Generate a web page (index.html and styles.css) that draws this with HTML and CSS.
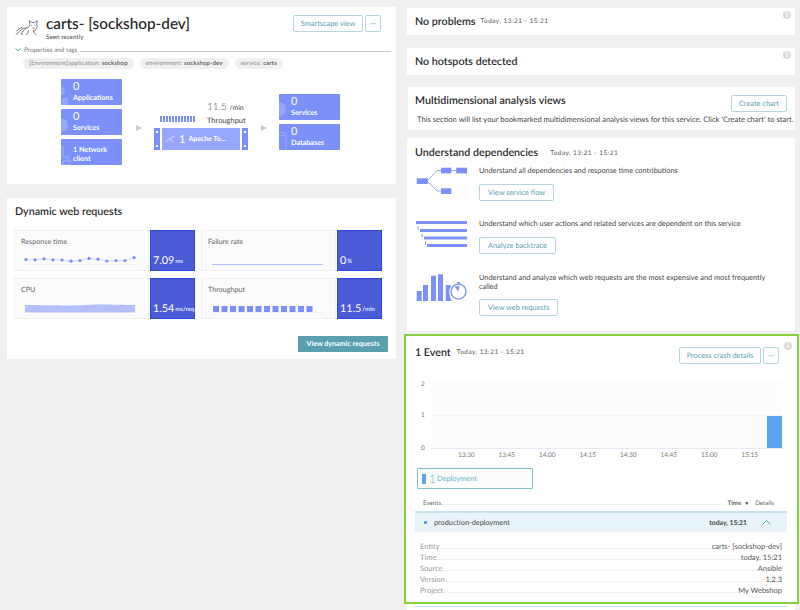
FILE: index.html
```html
<!DOCTYPE html>
<html>
<head>
	<meta charset="UTF-8">
	<title>carts- [sockshop-dev]</title>
	<link rel="stylesheet" href="styles.css">
</head>
<body>
<div class="page">
	<div class="col left">
		<div class="card head-card">
			<div class="head">
				<svg class="cat" width="23" height="18" viewBox="0 0 34 24" fill="none" stroke="#555" stroke-width="1.100">
					<path d="M1 22l6-5c2-3 5-5 9-5l4-1 2-4-1-6 4 3h4l4-3-1 6 1 3-3 5-3 1 2 4 3 3"/>
					<path d="M16 12c-1 3-3 4-5 5l-2 4h3M20 15l-1 5-3 2M2 17c2-3 6-5 9-6M24 8l1 1M30 8l-1 1M26 12h3"/>
				</svg>
				<div class="head-text">
					<h1>carts- [sockshop-dev]</h1>
					<div class="seen">Seen recently</div>
				</div>
				<div class="head-btns">
					<a class="btn wide">Smartscape view</a>
					<a class="btn more">···</a>
				</div>
			</div>
			<div class="props">
				<svg width="6" height="4" viewBox="0 0 6 4" fill="none" stroke="#5fa8c0" stroke-width="1"><path d="M0.5 0.5l2.5 2.5 2.5-2.5"/></svg>
				<span>Properties and tags</span>
				<i></i>
			</div>
			<div class="tags">
				<span class="tag">[Environment]application: <b>sockshop</b></span>
				<span class="tag">environment: <b>sockshop-dev</b></span>
				<span class="tag">service: <b>carts</b></span>
			</div>
			<div class="scape">
				<div class="scape-col">
					<div class="node">
						<svg class="node-ico" width="8" height="26" viewBox="0 0 8 26" fill="#97a7fb"><circle cx="0" cy="12" r="4"/><rect x="1" y="19" width="6" height="7"/></svg>
						<strong>0</strong><span>Applications</span>
					</div>
					<div class="node">
						<svg class="node-ico" width="8" height="26" viewBox="0 0 8 26" fill="#97a7fb"><circle cx="0" cy="16" r="7"/></svg>
						<strong>0</strong><span>Services</span>
					</div>
					<div class="node">
						<svg class="node-ico" width="10" height="26" viewBox="0 0 10 26" fill="none" stroke="#97a7fb" stroke-width="1.500"><path d="M0 8h2v8H0M2 18h5v3M2 22h8v4H2z"/></svg>
						<span class="node-txt">1 Network<br>client</span>
					</div>
				</div>
				<div class="arrow"></div>
				<div class="mid">
					<div class="mid-top">
						<div class="tp-bars">
							<i></i><i></i><i></i><i></i><i></i><i></i><i></i><i></i><i></i><i></i><i></i><i></i>
						</div>
						<div class="tp">
							<div class="tp-num">11.5 <small>/min</small></div>
							<div class="tp-lbl">Throughput</div>
						</div>
					</div>
					<div class="proc">
						<div class="proc-side"><i></i><i></i></div>
						<div class="proc-main">
							<svg width="10" height="8" viewBox="0 0 10 8" fill="none" stroke="#d5dcff" stroke-width="0.8"><path d="M0 7l3-3 2 1 2-4 2 1M3 4l2-2M5 5l2 2"/></svg>
							<b>1</b> Apache To...
						</div>
						<div class="proc-side"><i></i><i></i></div>
					</div>
				</div>
				<div class="arrow"></div>
				<div class="scape-col">
					<div class="node">
						<svg class="node-ico" width="8" height="26" viewBox="0 0 8 26" fill="#97a7fb"><circle cx="0" cy="15" r="7"/></svg>
						<strong>0</strong><span>Services</span>
					</div>
					<div class="node">
						<svg class="node-ico" width="8" height="26" viewBox="0 0 8 26" fill="none" stroke="#97a7fb" stroke-width="1"><ellipse cx="3" cy="10" rx="4" ry="1.500"/><path d="M7 10v16"/></svg>
						<strong>0</strong><span>Databases</span>
					</div>
				</div>
			</div>
		</div>

		<div class="card dyn-card">
			<h2>Dynamic web requests</h2>
			<div class="tiles">
				<div class="tile">
					<div class="tile-body">
						<div class="tile-lbl">Response time</div>
						<svg width="116" height="14" viewBox="0 0 116 14" fill="#7b90f9" stroke="none">
							<path d="M2 12.500h112" stroke="#eef0fb" stroke-width="1"/>
							<path d="M2 7.500l9 .3 9-1 9 1 9 .2 9 1.200 9-.6 9-2.200 9 .8 9 1.800 9-.4 9 0 9-3" fill="none" stroke="#c3cdfb" stroke-width="0.8"/>
							<circle cx="2" cy="7.500" r="1.600"/><circle cx="11" cy="7.800" r="1.600"/><circle cx="20" cy="6.800" r="1.600"/><circle cx="29" cy="7.800" r="1.600"/><circle cx="38" cy="8" r="1.600"/><circle cx="47" cy="9.200" r="1.600"/><circle cx="56" cy="8.600" r="1.600"/><circle cx="65" cy="6.400" r="1.600"/><circle cx="74" cy="7.200" r="1.600"/><circle cx="83" cy="9" r="1.600"/><circle cx="92" cy="8.600" r="1.600"/><circle cx="101" cy="8.600" r="1.600"/><circle cx="110" cy="5.600" r="1.600"/>
						</svg>
					</div>
					<div class="tile-val"><b>7.09</b> ms</div>
				</div>
				<div class="tile">
					<div class="tile-body">
						<div class="tile-lbl">Failure rate</div>
						<svg width="116" height="14" viewBox="0 0 116 14"><path d="M1 12.500h111" stroke="#b4c0fb" stroke-width="1"/></svg>
					</div>
					<div class="tile-val"><b>0</b> %</div>
				</div>
				<div class="tile">
					<div class="tile-body">
						<div class="tile-lbl">CPU</div>
						<svg width="116" height="14" viewBox="0 0 116 14"><path d="M1 5c30 0 40 1 60 0s30 0 50 0v7.500H1z" fill="#b4c0fb"/></svg>
					</div>
					<div class="tile-val"><b>1.54</b> ms/req</div>
				</div>
				<div class="tile">
					<div class="tile-body">
						<div class="tile-lbl">Throughput</div>
						<svg width="116" height="14" viewBox="0 0 116 14" fill="#7b90f9">
							<path d="M1 12.500h112" stroke="#eef0fb" stroke-width="1"/>
							<rect x="2" y="6" width="6" height="6"/><rect x="10.500" y="6" width="6" height="6"/><rect x="19" y="6" width="6" height="6"/><rect x="27.500" y="6" width="6" height="6"/><rect x="36" y="6" width="6" height="6"/><rect x="44.500" y="6" width="6" height="6"/><rect x="53" y="6" width="6" height="6"/><rect x="61.500" y="6" width="6" height="6"/><rect x="70" y="6" width="6" height="6"/><rect x="78.500" y="6" width="6" height="6"/><rect x="87" y="6" width="6" height="6"/><rect x="95.500" y="6" width="6" height="6"/>
						</svg>
					</div>
					<div class="tile-val"><b>11.5</b> /min</div>
				</div>
			</div>
			<div class="dyn-foot"><a class="btn-solid">View dynamic requests</a></div>
		</div>
	</div>

	<div class="col right">
		<div class="card bar-card">
			<span class="info">i</span>
			<h2>No problems</h2><span class="when">Today, 13:21 - 15:21</span>
		</div>
		<div class="card bar-card">
			<span class="info">i</span>
			<h2>No hotspots detected</h2>
		</div>
		<div class="card multi-card">
			<div class="multi-top">
				<h2>Multidimensional analysis views</h2>
				<a class="btn">Create chart</a>
			</div>
			<p>This section will list your bookmarked multidimensional analysis views for this service. Click 'Create chart' to start.</p>
		</div>
		<div class="card dep-card">
			<div class="dep-title"><h2>Understand dependencies</h2><span class="when">Today, 13:21 - 15:21</span></div>
			<div class="dep">
				<svg width="52" height="28" viewBox="0 0 52 28" fill="#7b90f9" stroke="#7b90f9">
					<rect x="0.700" y="11.300" width="11" height="5.700" stroke="none"/><rect x="25" y="0.700" width="10.300" height="5.700" stroke="none"/><rect x="40.300" y="0.700" width="10.700" height="5.700" stroke="none"/><rect x="25" y="21.300" width="10.300" height="5.700" stroke="none"/>
					<path d="M11 14L21 3.500h4M35 3.500h6M11 14l10 10h4" fill="none" stroke-width="0.800"/>
				</svg>
				<div class="dep-main">
					<p>Understand all dependencies and response time contributions</p>
					<a class="btn">View service flow</a>
				</div>
			</div>
			<div class="dep">
				<svg width="52" height="28" viewBox="0 0 52 28" fill="#7b90f9">
					<rect x="0" y="0" width="51" height="3"/><rect x="4" y="8" width="47" height="3"/><rect x="8" y="15.500" width="43" height="3"/><rect x="11" y="23" width="40" height="3"/>
					<rect x="1.500" y="5.500" width="1" height="3"/><rect x="5.500" y="13" width="1" height="3"/><rect x="9" y="20.500" width="1" height="3"/>
				</svg>
				<div class="dep-main">
					<p>Understand which user actions and related services are dependent on this service</p>
					<a class="btn">Analyze backtrace</a>
				</div>
			</div>
			<div class="dep">
				<svg width="52" height="28" viewBox="0 0 52 28" fill="#7b90f9">
					<rect x="0.700" y="17" width="5" height="10"/><rect x="7" y="11" width="5" height="16"/><rect x="15" y="1.700" width="5" height="25.300"/><rect x="22" y="0.300" width="5" height="26.700"/><path d="M29.700 11h5v2c-1 1.500-1.500 3-1.500 5 0 3 1 6 2.500 9h-6z"/>
					<circle cx="42.500" cy="17.600" r="7.500" fill="none" stroke="#7b90f9" stroke-width="1.300"/><path d="M42.500 17.600l-4-5 5-.5z"/><path d="M41 8h3v1.500h-3z"/>
				</svg>
				<div class="dep-main">
					<p>Understand and analyze which web requests are the most expensive and most frequently called</p>
					<a class="btn">View web requests</a>
				</div>
			</div>
		</div>
		<div class="card event-card">
			<span class="info">i</span>
			<div class="ev-head">
				<h2>1 Event</h2><span class="when">Today, 13:21 - 15:21</span>
				<div class="ev-btns">
					<a class="btn">Process crash details</a>
					<a class="btn more">···</a>
				</div>
			</div>
			<div class="chart">
				<div class="y-axis"><span>2</span><span>1</span><span>0</span></div>
				<div class="plot-wrap">
					<div class="plot">
						<div class="plot-half"></div>
						<div class="plot-half low"><div class="bar"></div></div>
					</div>
					<div class="x-axis">
						<span>13:30</span><span>13:45</span><span>14:00</span><span>14:15</span><span>14:30</span><span>14:45</span><span>15:00</span><span>15:15</span>
					</div>
				</div>
			</div>
			<div class="deploy"><i></i><b>1</b><span>Deployment</span></div>
			<div class="ev-cols">
				<span>Events</span><em></em><b>Time</b><span class="sort">▼</span><span>Details</span>
			</div>
			<div class="ev-row">
				<i></i><span class="ev-name">production-deployment</span>
				<b>today, 15:21</b>
				<svg width="9" height="5" viewBox="0 0 9 5" fill="none" stroke="#4f9db5" stroke-width="1"><path d="M0.500 4.500l4-4 4 4"/></svg>
			</div>
			<div class="kv"><span>Entity</span><em></em><b>carts- [sockshop-dev]</b></div>
			<div class="kv"><span>Time</span><em></em><b>today, 15:21</b></div>
			<div class="kv"><span>Source</span><em></em><b>Ansible</b></div>
			<div class="kv"><span>Version</span><em></em><b>1.2.3</b></div>
			<div class="kv"><span>Project</span><em></em><b>My Webshop</b></div>
		</div>
		<div class="card next-card"><i></i></div>
	</div>
</div>
</body>
</html>
```

FILE: styles.css
```css
html, body{
	margin: 0;
	height: 610px;
	overflow: hidden;
	background: #f0f0f0;
}
body{
	font-family: Lato, "Noto Sans", sans-serif;
	color: #454646;
	text-rendering: geometricPrecision;
}
h1, h2, p{
	margin: 0;
}
.page{
	display: flex;
	gap: 11px;
	padding: 7px 5px 0 7px;
}
.col{
	display: flex;
	flex-direction: column;
}
.left{
	width: 389px;
	gap: 14px;
}
.right{
	width: 388px;
}
.card{
	position: relative;
	background: #fff;
	box-sizing: border-box;
}
h2{
	font-size: 10.700px;
	font-weight: 600;
	color: #2b2c2c;
	line-height: 16px;
	white-space: nowrap;
}
.when{
	font-size: 6.500px;
	letter-spacing: 0.45px;
	color: #555;
	white-space: nowrap;
}
.info{
	position: absolute;
	right: 4px;
	top: 3px;
	width: 8px;
	height: 8px;
	border-radius: 50%;
	background: #dcdcdc;
	color: #fff;
	font-size: 7px;
	font-weight: 700;
	line-height: 8px;
	text-align: center;
}
.btn{
	display: inline-block;
	box-sizing: border-box;
	height: 17px;
	padding: 0 8px;
	border: 1px solid #b7d5df;
	border-radius: 2px;
	background: #fff;
	color: #5a9fb6;
	font-size: 7.400px;
	line-height: 15px;
	text-align: center;
	white-space: nowrap;
}
.btn.more{
	width: 16px;
	padding: 0;
}
.btn.wide{
	width: 70px;
	padding: 0;
}

/* service header */
.head-card{
	height: 177px;
}
.head{
	display: flex;
	padding: 7px 15px 0 8px;
	height: 30px;
}
.cat{
	margin: 5px 8px 0 0;
}
.head-text{
	flex: 1;
}
h1{
	font-size: 15.300px;
	font-weight: 500;
	color: #222;
	line-height: 20px;
	white-space: nowrap;
}
.seen{
	font-size: 6.300px;
	line-height: 11px;
	margin-top: -2px;
}
.head-btns{
	display: flex;
	gap: 2px;
	margin-top: 1px;
}
.props{
	display: flex;
	align-items: center;
	gap: 3px;
	padding-left: 8px;
	margin-top: 2px;
	height: 9px;
	font-size: 6.300px;
	color: #777;
}
.props svg{
	margin-bottom: 1px;
}
.props i{
	flex: 1;
	margin: 2px 5px 0 0;
	border-top: 1px solid #c9c9c9;
}
.tags{
	display: flex;
	gap: 6px;
	padding-left: 16px;
	margin-top: 3px;
}
.tag{
	height: 11px;
	padding: 0 6px;
	border-radius: 6px;
	background: #f0f0f0;
	font-size: 6.100px;
	letter-spacing: 0.1px;
	line-height: 11px;
	color: #888;
	white-space: nowrap;
}
.tag b{
	font-weight: 600;
	color: #555;
}
.scape{
	display: flex;
	align-items: center;
	padding: 10px 0 0 54px;
}
.scape-col{
	display: flex;
	flex-direction: column;
	gap: 4px;
}
.scape-col:last-child{
	margin-left: 12px;
}
.node{
	position: relative;
	width: 61px;
	height: 26px;
	box-sizing: border-box;
	padding: 1px 0 0 12px;
	border-radius: 1px;
	background: #7b90f9;
	color: #fff;
	overflow: hidden;
}
.node strong{
	display: block;
	font-size: 11px;
	font-weight: 400;
	line-height: 13px;
}
.node span{
	display: block;
	font-size: 7.200px;
	font-weight: 700;
	line-height: 10px;
}
.node .node-txt{
	line-height: 9px;
	padding-top: 5px;
}
.node-ico{
	position: absolute;
	left: 0;
	top: 0;
}
.arrow{
	flex: none;
	width: 0;
	height: 0;
	margin: 12px 0 0 13px;
	border-left: 6px solid #c8c8c8;
	border-top: 3px solid transparent;
	border-bottom: 3px solid transparent;
}
.scape-col + .arrow{
	margin-left: 14px;
}
.mid{
	margin: 6px 0 0 12px;
	width: 94px;
}
.mid-top{
	display: flex;
	align-items: flex-end;
	padding-left: 6px;
}
.tp-bars{
	display: flex;
	gap: 1px;
	width: 47px;
	margin-bottom: 6px;
}
.tp-bars i{
	width: 2px;
	height: 6px;
	background: #7b90f9;
}
.tp{
	font-size: 7.500px;
	line-height: 10px;
	white-space: nowrap;
}
.tp-num{
	font-size: 10px;
	font-weight: 300;
	line-height: 15px;
}
.tp-num small{
	font-size: 7px;
	font-weight: 400;
}
.tp-lbl{
	margin-bottom: 2px;
}
.proc{
	display: flex;
	height: 22px;
	gap: 1px;
}
.proc-side{
	display: flex;
	flex-direction: column;
	justify-content: space-between;
	align-items: center;
	width: 6px;
	padding: 3px 0;
	box-sizing: border-box;
	background: #7b90f9;
}
.proc-side i{
	width: 2px;
	height: 2px;
	background: #fff;
}
.proc-main{
	display: flex;
	align-items: center;
	gap: 3px;
	flex: 1;
	margin: 0 1px;
	padding-left: 4px;
	background: #97a7fb;
	color: #fff;
	font-size: 7px;
	font-weight: 700;
}
.proc-main b{
	font-size: 11px;
	font-weight: 400;
}

/* dynamic web requests */
.dyn-card{
	height: 161px;
	padding-top: 6px;
}
.dyn-card h2{
	margin-left: 8px;
}
.tiles{
	display: grid;
	grid-template-columns: 181px 181px;
	column-gap: 6px;
	row-gap: 7px;
	margin: 10px 0 0 7px;
}
.tile{
	display: flex;
	height: 41px;
}
.tile-body{
	flex: none;
	box-sizing: border-box;
	width: 135px;
	margin-right: 1px;
	padding: 6px 0 0 6px;
	border: 1px solid #f0f0f0;
	background: #fbfbfb;
}
.tile-lbl{
	font-size: 7.200px;
	line-height: 10px;
	color: #666;
}
.tile-body svg{
	display: block;
	margin: 5px 0 0 3px;
}
.tile-val{
	flex: none;
	width: 45px;
	display: flex;
	align-items: flex-end;
	gap: 1px;
	padding: 0 0 3px 2px;
	background: #4a5dd6;
	border: 1px solid #2c47d8;
	box-sizing: border-box;
	color: #dfe3ff;
	font-size: 6px;
	font-weight: 700;
	line-height: 10px;
	white-space: nowrap;
}
.tile-val b{
	font-size: 10.800px;
	font-weight: 400;
	color: #fff;
	line-height: 13px;
}
.dyn-foot{
	display: flex;
	justify-content: flex-end;
	margin: 17px 8px 0 0;
}
.btn-solid{
	height: 16px;
	width: 90px;
	border-radius: 1px;
	background: #5a9fb0;
	color: #fff;
	font-size: 7.100px;
	font-weight: 700;
	line-height: 16px;
	text-align: center;
	white-space: nowrap;
}

/* right column */
.bar-card{
	display: flex;
	align-items: center;
	gap: 5px;
	height: 27px;
	margin: 1px 0 12px;
	padding-left: 8px;
}
.multi-card{
	height: 43px;
	margin: 0 0 8px 1px;
	padding: 5px 8px 0 7px;
}
.multi-top{
	display: flex;
	justify-content: space-between;
	height: 22px;
}
.multi-top h2{
	margin-top: 1px;
}
.multi-top .btn{
	margin-top: 3px;
	padding: 0;
	width: 56px;
}
.multi-card p{
	margin-left: 2px;
	font-size: 7.600px;
	line-height: 10px;
	white-space: nowrap;
}
.dep-card{
	height: 193px;
	padding: 6px 8px 0 8px;
}
.dep-title{
	display: flex;
	align-items: center;
	gap: 12px;
	height: 16px;
	margin-top: 1px;
}
.dep{
	display: flex;
	gap: 11px;
	height: 53px;
	padding-left: 1px;
}
.dep:nth-child(2){
	height: 48px;
	margin-top: 3px;
}
.dep:nth-child(3){
	margin-top: 7px;
}
.dep:nth-child(4){
	margin-top: 1px;
}
.dep svg{
	flex: none;
	margin-top: 2px;
}
.dep:nth-child(2) svg{
	margin-top: 3px;
}
.dep:nth-child(4) svg{
	margin-top: 1px;
}
.dep-main p{
	font-size: 7.350px;
	line-height: 9px;
	width: 306px;
}
.dep:nth-child(2) p{
	margin-top: 2px;
}
.dep-main .btn{
	margin-top: 9px;
	height: 17px;
}
.dep:nth-child(4) .btn{
	margin-top: 8px;
}

/* event card sits under a green highlight */
.event-card{
	height: 270px;
	margin: 3px -4px 0 -3px;
	padding: 0 10px 0 9px;
	border: 2px solid #86d13b;
}
.event-card .info{
	top: 6px;
	right: 5px;
}
.ev-head{
	display: flex;
	align-items: center;
	gap: 6px;
	height: 30px;
	margin-top: 1px;
}
.ev-head h2, .ev-head .when{
	margin-top: 1px;
}
.ev-btns{
	display: flex;
	gap: 2px;
	margin-left: auto;
	margin-right: 8px;
	margin-top: 7px;
}
.ev-btns .btn{
	padding: 0 6.500px;
}
.ev-btns .btn.more{
	padding: 0;
}
.chart{
	display: flex;
	margin-top: 15px;
}
.y-axis{
	display: flex;
	flex-direction: column;
	justify-content: space-between;
	width: 20px;
	height: 66px;
	margin: 2px 0 0 -4px;
	padding-left: 10px;
	box-sizing: border-box;
	font-size: 6.500px;
	color: #777;
	line-height: 8px;
}
.y-axis span{
	margin-top: -3px;
}
.y-axis span:last-child{
	margin: 0 0 -3px;
}
.plot-wrap{
	width: 352px;
}
.plot{
	display: flex;
	flex-direction: column;
	height: 67px;
	box-sizing: border-box;
	border-bottom: 1px solid #e6eaf5;
	background: #fcfcfc;
}
.plot-half{
	flex: 1;
	display: flex;
	justify-content: flex-end;
}
.plot-half.low{
	border-top: 1px solid #f3f3f3;
}
.bar{
	width: 15px;
	margin-right: 1px;
	background: #5ba4f0;
}
.x-axis{
	display: flex;
	padding: 3px 0 0 15px;
	font-size: 6.500px;
	line-height: 8px;
	color: #777;
}
.x-axis span{
	width: 40.500px;
	text-align: center;
}
.deploy{
	display: flex;
	align-items: center;
	width: 116px;
	height: 21px;
	margin: 8px 0 0 2px;
	padding-left: 4px;
	box-sizing: border-box;
	border: 1px solid #7fbfd0;
	border-radius: 1px;
	background: #fbfbfb;
	color: #66b4cc;
	font-size: 7.400px;
}
.deploy i{
	width: 4px;
	height: 10px;
	background: #5ba4f0;
}
.deploy b{
	margin: 0 1px 0 3px;
	font-size: 12px;
	font-weight: 300;
}
.ev-cols, .kv{
	display: flex;
	align-items: baseline;
	white-space: nowrap;
}
.ev-cols{
	margin: 10px 13px 0 8px;
	height: 9px;
	font-size: 6.200px;
	line-height: 9px;
	color: #666;
}
.ev-cols em, .kv em{
	flex: 1;
	margin: 0 1px;
	border-bottom: 1px dotted #e4e4e4;
}
.ev-cols b{
	font-weight: 700;
}
.sort{
	margin: 0 6px 0 3px;
	font-size: 5px;
	color: #333;
}
.ev-row{
	display: flex;
	align-items: center;
	height: 19px;
	margin-top: 3px;
	border-top: 2px solid #c8e2ec;
	background: #e8f4f8;
	font-size: 7.300px;
}
.ev-row i{
	width: 3px;
	height: 3px;
	margin-left: 9px;
	background: #5ba4f0;
}
.ev-name{
	flex: 1;
	margin-left: 7px;
}
.ev-row b{
	font-size: 6.800px;
	font-weight: 700;
}
.ev-row svg{
	margin: 0 16px 0 15px;
}
.kv{
	height: 11.100px;
	margin: 0 5px;
	font-size: 7.500px;
	line-height: 11px;
	color: #999;
}
.ev-row + .kv{
	margin-top: 9px;
}
.kv b{
	font-weight: 400;
	color: #555;
}
.next-card{
	height: 10px;
	padding: 2px 8px 0;
}
.next-card i{
	display: block;
	border-top: 1px solid #c8e2ec;
}
```
